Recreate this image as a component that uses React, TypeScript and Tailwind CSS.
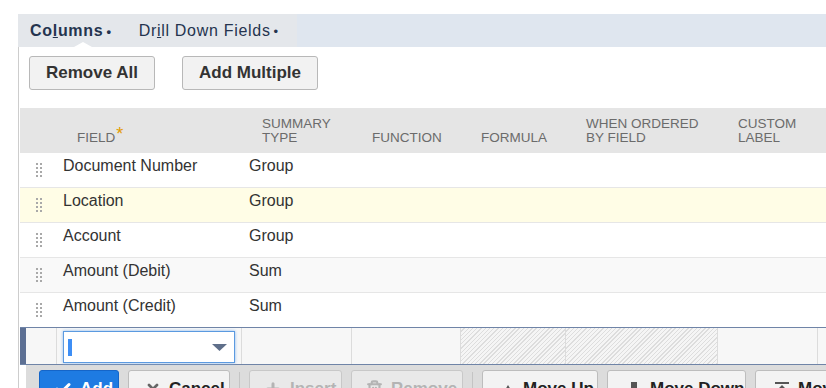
import { Check, X, Plus, Trash2 } from "lucide-react";

const cols = "grid grid-cols-[37px_185px_110px_109px_105px_152px_100px_1fr]";

const rows = [
  { field: "Document Number", type: "Group", bg: "bg-white" },
  { field: "Location", type: "Group", bg: "bg-[#fffde6]" },
  { field: "Account", type: "Group", bg: "bg-white" },
  { field: "Amount (Debit)", type: "Sum", bg: "bg-[#f9f9f9]" },
  { field: "Amount (Credit)", type: "Sum", bg: "bg-white" },
];

const DragHandle = () => (
  <div className="grid grid-cols-2 gap-x-[2px] gap-y-[2px]">
    {Array.from({ length: 8 }).map((_, i) => (
      <span key={i} className="w-[2px] h-[2px] bg-[#a9a9a9]" />
    ))}
  </div>
);

const Header = ({ lines }: { lines: string[] }) => (
  <div className="pl-[20px] pb-[8px] flex flex-col justify-end text-[13.5px] leading-[14px] text-[#6b6b6b]">
    {lines.map((l) => (
      <span key={l}>{l}</span>
    ))}
  </div>
);

const hatch =
  "bg-[repeating-linear-gradient(135deg,#f5f5f5_0px,#f5f5f5_2px,#dddddd_2px,#dddddd_3px)]";

const ToolButton = ({
  children,
  className,
}: {
  children: React.ReactNode;
  className: string;
}) => (
  <div
    className={`shrink-0 h-[30px] rounded-t-[3px] border flex items-start pt-[8px] gap-[8px] text-[17px] font-bold leading-[20px] whitespace-nowrap overflow-hidden ${className}`}
  >
    {children}
  </div>
);

const Sep = () => <div className="shrink-0 w-px h-[22px] bg-[#c4c4c4] mt-[2px]" />;

export default function App() {
  return (
    <div className="w-[826px] h-[388px] overflow-hidden bg-white pt-[14px] font-[family-name:'Liberation_Sans',Arial,sans-serif] text-[#333]">
      {/* tabs */}
      <div className="ml-[18px] h-[33px] flex bg-[#dfe6ef]">
        <div className="relative w-[279px] bg-[#e4e7eb] flex items-center text-[16px] text-[#24344f] whitespace-nowrap">
          <span className="ml-[12px] font-bold tracking-[0.7px]">
            Co<span className="underline">l</span>umns
            <span className="ml-[3px] text-[13px]">•</span>
          </span>
          <span className="ml-[27px] tracking-[0.7px]">
            Dr<span className="underline">i</span>ll Down Fields
            <span className="ml-[3px] text-[13px]">•</span>
          </span>
          <span className="absolute left-[56px] bottom-0 w-0 h-0 border-l-[9px] border-r-[9px] border-b-[5px] border-l-transparent border-r-transparent border-b-white" />
        </div>
      </div>

      {/* panel */}
      <div className="ml-[18px] border-l border-[#cdcdcd] pl-px h-[341px]">
        <div className="flex gap-[27px] pl-[9px] pt-[9px] pb-[18px]">
          <button className="h-[34px] px-[16px] rounded-[3px] border border-[#b8b8b8] bg-[#f2f2f2] text-[17px] font-bold text-[#333]">
            Remove All
          </button>
          <button className="h-[34px] px-[16px] rounded-[3px] border border-[#b8b8b8] bg-[#f2f2f2] text-[17px] font-bold text-[#333]">
            Add Multiple
          </button>
        </div>

        {/* header */}
        <div className={`${cols} h-[45px] bg-[#e5e5e5]`}>
          <div />
          <div className="pl-[20px] pb-[8px] flex items-end text-[13.5px] leading-[14px] text-[#6b6b6b]">
            FIELD
            <span className="relative top-[-2px] ml-[1px] text-[18px] leading-none text-[#e39b00]">*</span>
          </div>
          <Header lines={["SUMMARY", "TYPE"]} />
          <Header lines={["FUNCTION"]} />
          <Header lines={["FORMULA"]} />
          <Header lines={["WHEN ORDERED", "BY FIELD"]} />
          <Header lines={["CUSTOM", "LABEL"]} />
          <div />
        </div>

        {/* rows */}
        {rows.map((r) => (
          <div
            key={r.field}
            className={`${cols} h-[35px] border-b border-[#e6e6e6] ${r.bg} text-[16px] leading-[18px] text-[#333]`}
          >
            <div className="flex items-center justify-center">
              <DragHandle />
            </div>
            <div className="pl-[6px] pt-[4px]">{r.field}</div>
            <div className="pl-[7px] pt-[4px]">{r.type}</div>
          </div>
        ))}

        {/* edit row */}
        <div className="flex h-[38px] -mt-px border-t border-b border-[#6f84a7] bg-[#f7f7f7]">
          <div className="w-[6px] bg-[#5d7094]" />
          <div className="grid grid-cols-[31px_185px_110px_109px_105px_152px_100px_1fr] flex-1">
            <div className="border-r border-[#dcdcdc]" />
            <div className="border-r border-[#dcdcdc] px-[6px] pt-[3px]">
              <div className="h-[32px] bg-white border border-[#5b9ae0] shadow-[0_0_3px_#8ab8ee] flex items-center justify-between pl-[4px] pr-[7px]">
                <span className="w-[4px] h-[17px] bg-[#3d8ef5]" />
                <svg width="15" height="7" viewBox="0 0 15 7">
                  <path d="M0 0h15L7.5 7z" fill="#5f6f8a" />
                </svg>
              </div>
            </div>
            <div className="border-r border-[#dcdcdc]" />
            <div className="border-r border-[#dcdcdc]" />
            <div className={`border-r border-[#dcdcdc] ${hatch}`} />
            <div className={`border-r border-[#dcdcdc] ${hatch}`} />
            <div className="border-r border-[#dcdcdc]" />
            <div />
          </div>
        </div>

        {/* toolbar */}
        <div className="ml-[6px] h-[30px] bg-[#dcdcdc] flex items-start pt-[5px] pl-[13px] gap-[9px] overflow-hidden">
          <ToolButton className="w-[80px] bg-[#1e7be2] border-[#1565c8] text-white pl-[14px]">
            <Check size={18} strokeWidth={4} className="mt-[1px] shrink-0" />
            Add
          </ToolButton>
          <ToolButton className="w-[102px] bg-[#f3f3f3] border-[#bdbdbd] text-[#222] pl-[16px]">
            <X size={16} strokeWidth={4} className="mt-[2px] shrink-0 text-[#666]" />
            Cancel
          </ToolButton>
          <Sep />
          <ToolButton className="w-[93px] bg-[#e9e9e9] border-[#c8c8c8] text-[#b4b4b4] pl-[14px]">
            <Plus size={18} strokeWidth={4} className="mt-[1px] shrink-0" />
            Insert
          </ToolButton>
          <ToolButton className="w-[112px] bg-[#e9e9e9] border-[#c8c8c8] text-[#b4b4b4] pl-[14px]">
            <Trash2 size={17} strokeWidth={3} className="mt-[1px] shrink-0" />
            Remove
          </ToolButton>
          <Sep />
          <ToolButton className="w-[116px] bg-[#f3f3f3] border-[#bdbdbd] text-[#222] pl-[18px]">
            <svg width="14" height="12" viewBox="0 0 14 12" className="mt-[5px] shrink-0">
              <path d="M7 1L13 11H1z" fill="#555" />
            </svg>
            Move Up
          </ToolButton>
          <ToolButton className="w-[139px] bg-[#f3f3f3] border-[#bdbdbd] text-[#222] pl-[18px]">
            <svg width="16" height="16" viewBox="0 0 16 16" className="mt-[3px] shrink-0">
              <path d="M5 0h6v7h4l-7 8-7-8h4z" fill="#555" />
            </svg>
            Move Down
          </ToolButton>
          <ToolButton className="w-[130px] bg-[#f3f3f3] border-[#bdbdbd] text-[#222] pl-[18px]">
            <svg width="16" height="16" viewBox="0 0 16 16" className="mt-[3px] shrink-0">
              <path d="M1 0h14v2H1zM8 3l7 7h-4v6H5v-6H1z" fill="#555" />
            </svg>
            Move Top
          </ToolButton>
        </div>
      </div>
    </div>
  );
}
